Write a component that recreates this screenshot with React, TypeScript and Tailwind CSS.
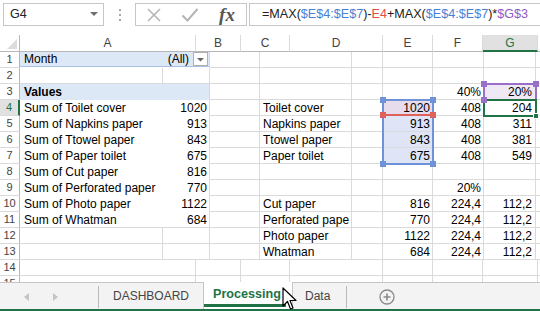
import React from "react";

const cellBase =
  "shrink-0 h-full flex items-center overflow-hidden whitespace-nowrap border-r border-b border-[#dadada]";

type CP = { w: string; className?: string; children?: React.ReactNode };
function C({ w, className = "", children }: CP) {
  return <div className={`${cellBase} ${w} ${className}`}>{children}</div>;
}

function RH({ n, sel = false }: { n: number; sel?: boolean }) {
  return (
    <div
      className={`shrink-0 h-full w-[20px] flex items-center justify-center border-b border-[#dadada] text-[11px] ${
        sel
          ? "bg-[#e1e1e1] text-[#217346] border-r-2 border-r-[#217346]"
          : "text-[#444] border-r border-r-[#b7b7b7]"
      }`}
    >
      {n}
    </div>
  );
}

type Right = { c?: string; e?: string; f?: string; g?: string; eBg?: string; gBg?: string };

function RightCells({ r }: { r: Right }) {
  return (
    <>
      <C w="w-[50px]" />
      <C w="w-[92px]" className="pl-[3px]">
        {r.c}
      </C>
      <C w="w-[31px]" />
      <C w="w-[50px]" className={`justify-end pr-[2px] ${r.eBg ?? ""}`}>
        {r.e}
      </C>
      <C w="w-[51px]" className="justify-end pr-[2px]">
        {r.f}
      </C>
      <C w="w-[52px]" className={`justify-end pr-[3px] ${r.gBg ?? ""}`}>
        {r.g}
      </C>
      <C w="w-[10px]" />
    </>
  );
}

const pivot: [string, string][] = [
  ["Sum of Toilet cover", "1020"],
  ["Sum of Napkins paper", "913"],
  ["Sum of Ttowel paper", "843"],
  ["Sum of Paper toilet", "675"],
  ["Sum of Cut paper", "816"],
  ["Sum of Perforated paper", "770"],
  ["Sum of Photo paper", "1122"],
  ["Sum of Whatman", "684"],
];

const rights: Right[] = [
  { c: "Toilet cover", e: "1020", f: "408", g: "204", eBg: "bg-[#e6dcec]" },
  { c: "Napkins paper", e: "913", f: "408", g: "311", eBg: "bg-[#dfe5f7]" },
  { c: "Ttowel paper", e: "843", f: "408", g: "381", eBg: "bg-[#dfe5f7]" },
  { c: "Paper toilet", e: "675", f: "408", g: "549", eBg: "bg-[#dfe5f7]" },
  {},
  { f: "20%" },
  { c: "Cut paper", e: "816", f: "224,4", g: "112,2" },
  { c: "Perforated pape", e: "770", f: "224,4", g: "112,2" },
];

function Handle({ x, y, color }: { x: number; y: number; color: string }) {
  return (
    <div
      className={`absolute w-[6px] h-[6px] ${color}`}
      style={{ left: x - 3, top: y - 3 }}
    />
  );
}

function Cursor() {
  return (
    <svg
      className="absolute left-[282px] top-[287px]"
      width="16"
      height="24"
      viewBox="0 0 16 24"
    >
      <path
        d="M1 1 L1 19 L5.5 14.5 L8.5 22 L11 21 L8 13.5 L14 13.5 Z"
        fill="#fff"
        stroke="#000"
        strokeWidth="1.2"
        strokeLinejoin="round"
      />
    </svg>
  );
}

export default function App() {
  return (
    <div className="relative w-[540px] h-[311px] overflow-hidden bg-white font-['Liberation_Sans',Arial,sans-serif] text-[12px] text-[#000]">
      {/* Formula bar */}
      <div className="h-[30px] flex items-start pt-[3px]">
        <div className="ml-[3px] w-[101px] h-[23px] border border-[#c6c6c6] flex items-center pl-[6px] pr-[5px] text-[12.6px] text-[#222]">
          <span className="flex-1">G4</span>
          <svg width="8" height="5" viewBox="0 0 8 5">
            <path d="M0 0 L8 0 L4 4 Z" fill="#6f6f6f" />
          </svg>
        </div>
        <div className="w-[31px] h-[23px] flex flex-col items-center justify-center gap-[3px]">
          <div className="w-[2px] h-[2px] bg-[#a8a8a8]" />
          <div className="w-[2px] h-[2px] bg-[#a8a8a8]" />
          <div className="w-[2px] h-[2px] bg-[#a8a8a8]" />
        </div>
        <div className="w-[112px] h-[23px] border border-[#c6c6c6] flex items-center">
          <div className="w-[36px] flex justify-center">
            <svg width="16" height="16" viewBox="0 0 16 16">
              <path d="M2 2 L14 14 M14 2 L2 14" stroke="#b5b5b5" strokeWidth="1.6" />
            </svg>
          </div>
          <div className="w-[36px] flex justify-center">
            <svg width="18" height="16" viewBox="0 0 18 16">
              <path d="M1.5 8.5 L6.5 13.5 L16.5 2" stroke="#b5b5b5" strokeWidth="2" fill="none" />
            </svg>
          </div>
          <div className="w-[38px] flex justify-center font-['Liberation_Serif',serif] italic font-bold text-[19px] text-[#555] leading-none">
            fx
          </div>
        </div>
        <div className="ml-[2px] flex-1 h-[23px] border border-r-0 border-[#c6c6c6] flex items-center pl-[12px] text-[12.6px] text-[#222] whitespace-nowrap">
          <span>=MAX(</span>
          <span className="text-[#4a7fd6]">$E$4:$E$7</span>
          <span>)-</span>
          <span className="text-[#e0504a]">E4</span>
          <span>+MAX(</span>
          <span className="text-[#4a7fd6]">$E$4:$E$7</span>
          <span>)*</span>
          <span className="text-[#8e59c4]">$G$3</span>
        </div>
      </div>
      <div className="h-[5px]" />

      {/* Column headers */}
      <div className="flex h-[17px] text-[12px] text-[#444]">
        <div className="shrink-0 w-[20px] h-full border-r border-b border-[#b7b7b7] relative">
          <svg className="absolute left-[7px] top-[4px]" width="10" height="10" viewBox="0 0 10 10">
            <path d="M10 0 L10 10 L0 10 Z" fill="#dcdcdc" />
          </svg>
        </div>
        {[
          ["w-[176px]", "A"],
          ["w-[45px]", "B"],
          ["w-[49px]", "C"],
          ["w-[93px]", "D"],
          ["w-[50px]", "E"],
          ["w-[50px]", "F"],
        ].map(([w, l]) => (
          <div
            key={l}
            className={`shrink-0 h-full ${w} flex items-center justify-center border-r border-r-[#dadada] border-b border-b-[#b7b7b7]`}
          >
            {l}
          </div>
        ))}
        <div className="shrink-0 h-full w-[55px] flex items-center justify-center bg-[#e1e1e1] text-[#217346] border-r border-r-[#dadada] border-b-2 border-b-[#217346]">
          G
        </div>
        <div className="shrink-0 h-full w-[10px] border-b border-b-[#b7b7b7]" />
      </div>

      {/* Grid */}
      <div className="relative h-[230px] overflow-hidden">
        {/* Row 1 */}
        <div className="flex h-[16px]">
          <RH n={1} />
          <div className="shrink-0 w-[190px] h-full flex items-center bg-[#dde8f6] border-t border-b border-[#a9c1e0] border-r border-r-[#dadada] pl-[4px] pr-[1px] -mt-px h-[17px]">
            <span className="flex-1">Month</span>
            <span className="mr-[4px]">(All)</span>
            <div className="w-[15px] h-[14px] bg-white border border-[#b0b0b0] flex items-center justify-center">
              <svg width="7" height="6" viewBox="0 0 7 6">
                <path d="M0 2 L7 2 L3.5 5.5 Z" fill="#666" />
              </svg>
            </div>
          </div>
          <RightCells r={{}} />
        </div>
        {/* Row 2 */}
        <div className="flex h-[16px]">
          <RH n={2} />
          <C w="w-[143px]" />
          <C w="w-[47px]" />
          <RightCells r={{}} />
        </div>
        {/* Row 3 */}
        <div className="flex h-[16px]">
          <RH n={3} />
          <C w="w-[190px]" className="bg-[#dde8f6] font-bold pl-[4px] border-b-[#dde8f6]">
            Values
          </C>
          <RightCells r={{ f: "40%", g: "20%", gBg: "bg-[#efe8f5]" }} />
        </div>
        {/* Rows 4-11 */}
        {pivot.map(([l, v], i) => (
          <div key={l} className="flex h-[16px]">
            <RH n={i + 4} sel={i === 0} />
            <C
              w="w-[190px]"
              className={`pl-[4px] pr-[2px] ${i === 7 ? "" : "border-b-white"}`}
            >
              <span className="flex-1">{l}</span>
              <span>{v}</span>
            </C>
            <RightCells r={rights[i]} />
          </div>
        ))}
        {/* Rows 12-13 */}
        {[
          { c: "Photo paper", e: "1122", f: "224,4", g: "112,2" },
          { c: "Whatman", e: "684", f: "224,4", g: "112,2" },
        ].map((r, i) => (
          <div key={r.c} className="flex h-[16px]">
            <RH n={12 + i} />
            <C w="w-[143px]" />
            <C w="w-[47px]" />
            <RightCells r={r} />
          </div>
        ))}
        {/* Row 14 */}
        <div className="flex h-[16px]">
          <RH n={14} />
          <C w="w-[176px]" />
          <C w="w-[45px]" />
          <C w="w-[49px]" />
          <C w="w-[93px]" />
          <C w="w-[50px]" />
          <C w="w-[50px]" />
          <C w="w-[55px]" />
          <C w="w-[10px]" />
        </div>
        {/* Row 15 */}
        <div className="flex h-[16px]">
          <RH n={15} />
          <C w="w-[176px]" />
          <C w="w-[45px]" />
          <C w="w-[49px]" />
          <C w="w-[93px]" />
          <C w="w-[50px]" />
          <C w="w-[50px]" />
          <C w="w-[55px]" />
          <C w="w-[10px]" />
        </div>

        {/* Overlays: E range (blue) */}
        <div className="absolute left-[382px] top-[47px] w-[52px] h-[66px] border-2 border-[#6f93d9]" />
        <div className="absolute left-[382px] top-[62px] w-[52px] h-[2px] bg-[#e0615b]" />
        <Handle x={383} y={48} color="bg-[#6f93d9]" />
        <Handle x={433} y={48} color="bg-[#6f93d9]" />
        <Handle x={383} y={112} color="bg-[#6f93d9]" />
        <Handle x={433} y={112} color="bg-[#6f93d9]" />
        <Handle x={383} y={63} color="bg-[#e0615b]" />
        <Handle x={433} y={63} color="bg-[#e0615b]" />
        {/* G3 purple */}
        <div className="absolute left-[483px] top-[31px] w-[54px] h-[18px] border-2 border-[#9a6fc8]" />
        <Handle x={484} y={32} color="bg-[#9a6fc8]" />
        <Handle x={536} y={32} color="bg-[#9a6fc8]" />
        {/* G4 selection */}
        <div className="absolute left-[483px] top-[47px] w-[54px] h-[18px] border-2 border-[#217346]" />
        <Handle x={484} y={48} color="bg-[#9a6fc8]" />
        <div className="absolute left-[533px] top-[61px] w-[6px] h-[6px] bg-[#217346] border border-white" />
      </div>

      {/* Tab bar */}
      <div className="relative h-[29px] bg-[#f3f3f3] border-t border-[#c6c6c6] flex items-stretch text-[12px] text-[#444]">
        <div className="w-[98px] flex items-center">
          <svg className="ml-[24px]" width="6" height="8" viewBox="0 0 6 8">
            <path d="M5 0 L5 8 L0 4 Z" fill="#c4c4c4" />
          </svg>
          <svg className="ml-[23px]" width="6" height="8" viewBox="0 0 6 8">
            <path d="M0 0 L0 8 L5 4 Z" fill="#c4c4c4" />
          </svg>
        </div>
        <div className="my-[3px] w-px bg-[#b9b9b9]" />
        <div className="w-[104px] flex items-center justify-center pb-[2px]">DASHBOARD</div>
        <div className="-mt-px w-[90px] bg-white border-x border-[#c6c6c6] flex flex-col items-start pl-[9px] pb-[4px]">
          <div className="flex-1 flex items-center font-bold text-[12.6px] text-[#217346] pt-[2px]">
            Processing
          </div>
          <div className="-ml-[9px] w-[82px] h-[3px] bg-[#217346]" />
        </div>
        <div className="w-[53px] flex items-center pl-[12px] pb-[2px]">Data</div>
        <div className="my-[3px] w-px bg-[#b9b9b9]" />
        <div className="w-[80px] flex items-center justify-center">
          <svg width="16" height="16" viewBox="0 0 16 16">
            <circle cx="8" cy="8" r="7" fill="none" stroke="#8a8a8a" strokeWidth="1.3" />
            <path d="M8 4.5 V11.5 M4.5 8 H11.5" stroke="#8a8a8a" strokeWidth="1.6" />
          </svg>
        </div>
        <div className="absolute left-0 right-0 bottom-0 h-[2px] bg-[#217346]" />
      </div>
      <Cursor />
    </div>
  );
}
